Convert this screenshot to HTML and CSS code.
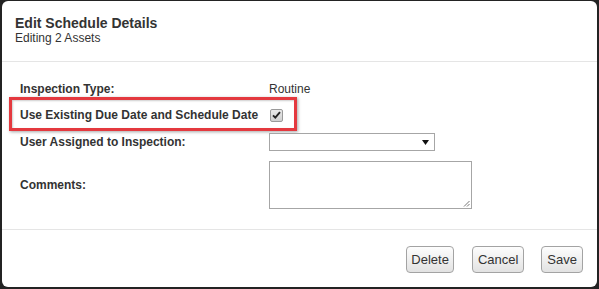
FILE: index.html
```html
<!DOCTYPE html>
<html>
<head>
<meta charset="utf-8">
<link rel="stylesheet" href="styles.css">
</head>
<body>
<div class="modal">
  <div class="modal-header">
    <div class="title">Edit Schedule Details</div>
    <div class="subtitle">Editing 2 Assets</div>
  </div>
  <div class="modal-body">
    <div class="row row-type">
      <div class="label">Inspection Type:</div>
      <div class="value">Routine</div>
    </div>
    <div class="row row-existing highlighted">
      <div class="label">Use Existing Due Date and Schedule Date</div>
      <div class="value"><span class="checkbox"><svg width="9" height="8" viewBox="0 0 9 8"><path d="M1 4.3 L3.3 6.6 L8 1.2" fill="none" stroke="#222" stroke-width="1.9"/></svg></span></div>
    </div>
    <div class="row row-user">
      <div class="label">User Assigned to Inspection:</div>
      <div class="value"><div class="select"><svg class="arrow" width="7" height="5" viewBox="0 0 7 5"><path d="M0 0 H7 L3.5 5 Z" fill="#111"/></svg></div></div>
    </div>
    <div class="row row-comments">
      <div class="label">Comments:</div>
      <div class="value"><div class="textarea"><svg class="grip" width="7" height="7" viewBox="0 0 7 7"><path d="M6.5 1 L1 6.5 M6.5 4 L4 6.5" stroke="#777" stroke-width="1"/></svg></div></div>
    </div>
  </div>
  <div class="modal-footer">
    <button class="btn btn-delete">Delete</button>
    <button class="btn btn-cancel">Cancel</button>
    <button class="btn btn-save">Save</button>
  </div>
</div>
</body>
</html>
```

FILE: styles.css
```css
html, body {
  margin: 0;
  padding: 0;
  background: #232323;
}
body {
  width: 599px;
  height: 289px;
  overflow: hidden;
  font-family: "Liberation Sans", Arial, sans-serif;
  color: #333;
}
.modal {
  margin: 1px 0 0 2px;
  width: 595px;
  height: 286px;
  background: #fff;
  border-radius: 6px;
  display: flex;
  flex-direction: column;
}
.modal-header {
  padding: 14px 13px 0 13px;
  height: 61px;
  box-sizing: border-box;
  border-bottom: 1px solid #e5e5e5;
}
.title {
  font-size: 14px;
  line-height: 16px;
  font-weight: bold;
  color: #333;
}
.subtitle {
  font-size: 12px;
  line-height: 14px;
}
.modal-body {
  padding: 20px 0 0 18px;
  height: 168px;
  box-sizing: border-box;
  border-bottom: 1px solid #e5e5e5;
}
.row {
  display: flex;
  align-items: center;
  font-size: 12px;
  line-height: 14px;
}
.row-existing { margin-top: 12px; position: relative; }
.row-user { margin-top: 11px; }
.row-comments { margin-top: 10px; }
.label {
  width: 249px;
  font-weight: bold;
  flex: none;
}
.value {
  display: flex;
  align-items: center;
}
.highlighted::before {
  content: "";
  position: absolute;
  left: -11px;
  top: -11px;
  width: 288px;
  height: 34px;
  box-sizing: border-box;
  border: 3px solid #e4393f;
  box-shadow: 1px 1px 3px rgba(0,0,0,0.35), inset 1px 1px 2px rgba(0,0,0,0.2);
  pointer-events: none;
}
.checkbox {
  width: 11px;
  height: 11px;
  margin-left: 1px;
  border: 1px solid #9a9a9a;
  border-radius: 2px;
  background: linear-gradient(#e8e8e8, #d0d0d0);
  display: flex;
  align-items: center;
  justify-content: center;
}
.select {
  width: 166px;
  height: 18px;
  box-sizing: border-box;
  border: 1px solid #a6a6a6;
  position: relative;
  background: #fff;
}
.arrow {
  position: absolute;
  right: 5px;
  top: 6px;
}
.textarea {
  width: 203px;
  height: 48px;
  box-sizing: border-box;
  border: 1px solid #a6a6a6;
  position: relative;
}
.grip {
  position: absolute;
  right: 1px;
  bottom: 1px;
}
.modal-footer {
  display: flex;
  justify-content: flex-end;
  padding: 16px 14px 0 0;
  gap: 17px;
}
.btn {
  height: 27px;
  padding: 0 5px;
  border: 1px solid #a3a3a3;
  border-radius: 4px;
  background: linear-gradient(#fdfdfd, #e2e2e2);
  font-family: "Liberation Sans", Arial, sans-serif;
  font-size: 13px;
  color: #333;
  line-height: 25px;
}
.btn-delete { margin-right: 1px; padding: 0 4px; }
```
